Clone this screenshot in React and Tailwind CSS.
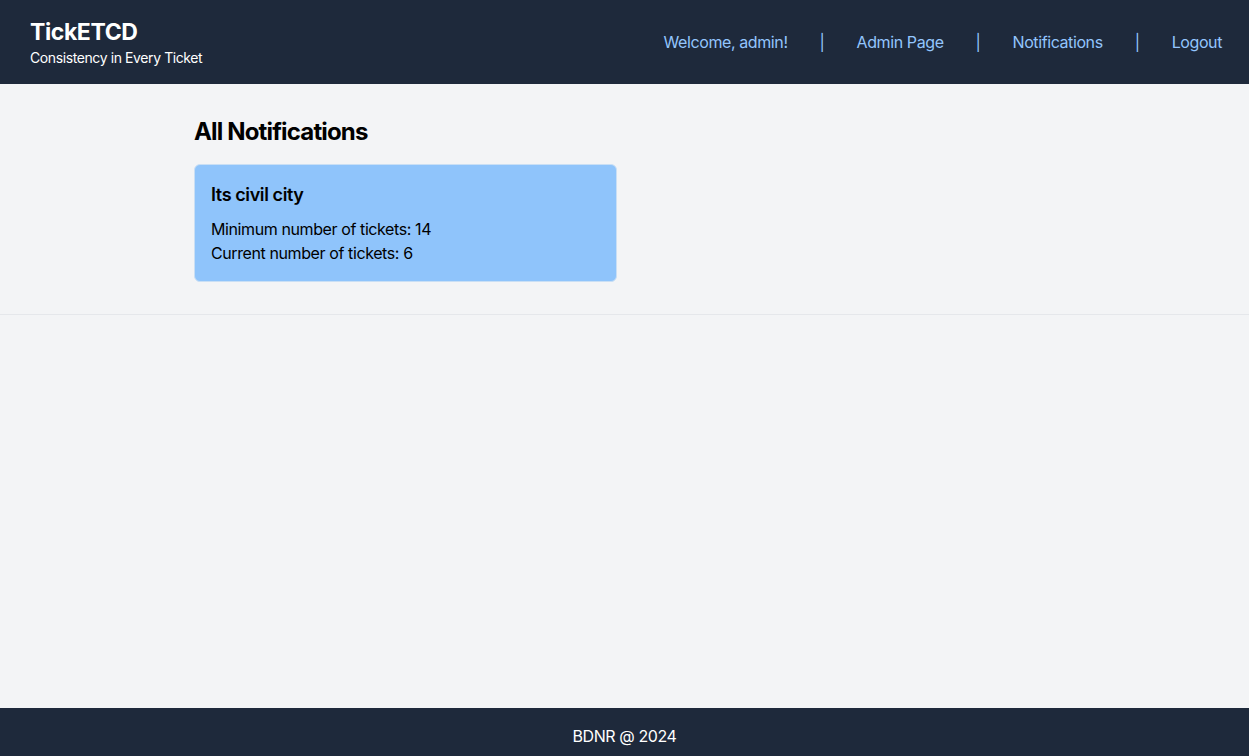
import React from 'react';

const notifications = [
  { id: 1, name: 'Its civil city', min: 14, current: 6 },
];

function Header() {
  return (
    <header className="bg-[#1e293b] h-[84px] flex items-center justify-between pl-[30px] pr-[27px]">
      <div className="flex flex-col">
        <h1 className="text-white text-[23px] leading-8 font-bold">TickETCD</h1>
        <p className="text-white text-sm">Consistency in Every Ticket</p>
      </div>
      <nav className="flex items-center gap-8 text-[#93c5fd] text-base">
        <span>Welcome, admin!</span>
        <span>|</span>
        <a href="#">Admin Page</a>
        <span>|</span>
        <a href="#">Notifications</a>
        <span>|</span>
        <a href="#">Logout</a>
      </nav>
    </header>
  );
}

export default function App() {
  return (
    <div className="min-h-[764px] flex flex-col bg-[#f3f4f6] font-['Inter',sans-serif] tracking-[-0.025em] text-black">
      <Header />

      <main className="flex-1">
        <section className="border-b border-[#e5e7eb] pt-8 pb-8">
          <div className="mx-auto w-[861px]">
            <h2 className="text-2xl font-bold tracking-[-0.035em] mb-4">All Notifications</h2>
            <div className="grid grid-cols-2 gap-4">
              {notifications.map((n) => (
                <div key={n.id} className="bg-[#8fc4fb] border border-[#c9dff5] rounded-md p-4">
                  <h3 className="text-lg font-semibold mb-2">{n.name}</h3>
                  <p>Minimum number of tickets: {n.min}</p>
                  <p>Current number of tickets: {n.current}</p>
                </div>
              ))}
            </div>
          </div>
        </section>
      </main>

      <footer className="bg-[#1e293b] py-4 text-center text-white text-base">
        BDNR @ 2024
      </footer>
    </div>
  );
}
